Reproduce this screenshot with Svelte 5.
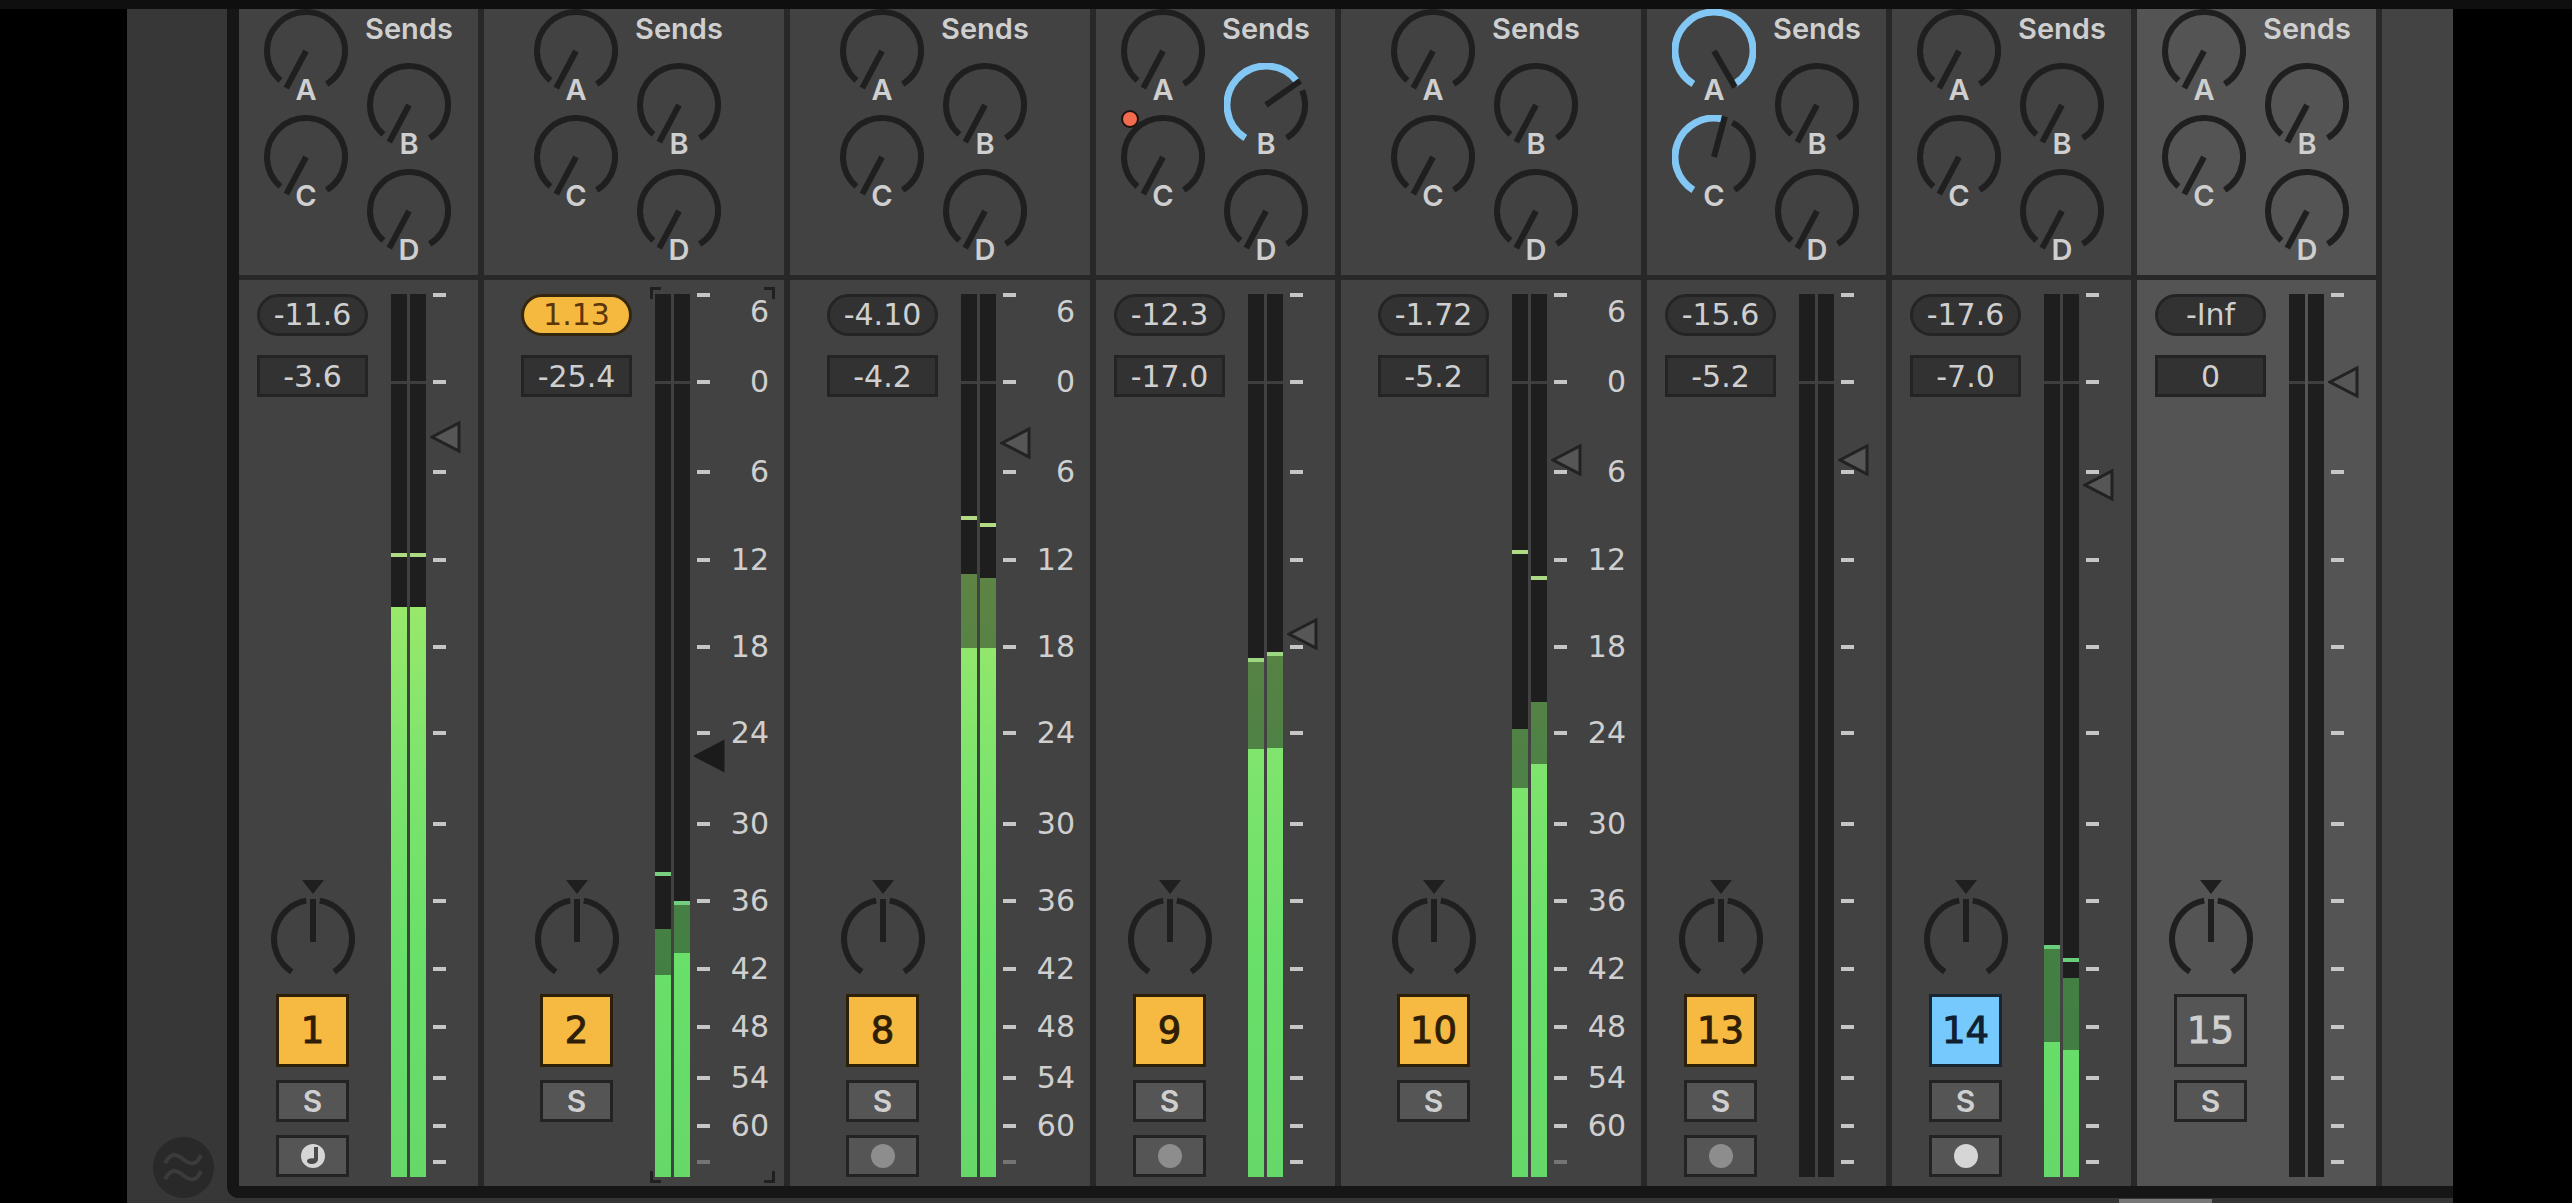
<script>
  const METER_HEIGHT = 883;

  // dB marks down the meter, `y` is the distance from its top edge
  const scale = [
    { y: 1, label: '6', labelY: 18 },
    { y: 88, label: '0' },
    { y: 178, label: '6' },
    { y: 266, label: '12' },
    { y: 353, label: '18' },
    { y: 439, label: '24' },
    { y: 530, label: '30' },
    { y: 607, label: '36' },
    { y: 675, label: '42' },
    { y: 733, label: '48' },
    { y: 784, label: '54' },
    { y: 832, label: '60' },
    { y: 868, label: '' }
  ];

  // levels: one entry per channel, peak line / held level / current level
  const tracks = [
    {
      id: 1, peak: '-11.6', volume: '-3.6', fader: 143, color: 'orange', arm: 'note',
      levels: [{ peak: 259, hold: 313, now: 313 }, { peak: 259, hold: 313, now: 313 }]
    },
    {
      id: 2, wide: true, selected: true, clipped: true, peak: '1.13', volume: '-25.4', fader: 462, color: 'orange',
      levels: [{ peak: 578, hold: 635, now: 681 }, { peak: 607, hold: 609, now: 659 }]
    },
    {
      id: 8, wide: true, peak: '-4.10', volume: '-4.2', fader: 149, color: 'orange', arm: 'off',
      levels: [{ peak: 222, hold: 280, now: 354 }, { peak: 229, hold: 284, now: 354 }]
    },
    {
      id: 9, peak: '-12.3', volume: '-17.0', fader: 340, color: 'orange', arm: 'off',
      sends: { B: 55 }, automated: 'C',
      levels: [{ peak: 364, hold: 365, now: 455 }, { peak: 358, hold: 359, now: 454 }]
    },
    {
      id: 10, wide: true, peak: '-1.72', volume: '-5.2', fader: 166, color: 'orange',
      levels: [{ peak: 256, hold: 435, now: 494 }, { peak: 282, hold: 408, now: 470 }]
    },
    {
      id: 13, peak: '-15.6', volume: '-5.2', fader: 166, color: 'orange', arm: 'off',
      sends: { A: 150, C: 15 }
    },
    {
      id: 14, peak: '-17.6', volume: '-7.0', fader: 191, color: 'blue', arm: 'on',
      levels: [{ peak: 651, hold: 652, now: 748 }, { peak: 664, hold: 684, now: 756 }]
    },
    { id: 15, peak: '-Inf', volume: '0', fader: 88, color: 'none', light: true }
  ];

  function point(angle, r) {
    const a = (angle * Math.PI) / 180;
    return `${(42 + r * Math.sin(a)).toFixed(2)} ${(42 - r * Math.cos(a)).toFixed(2)}`;
  }

  // angles run clockwise from twelve o'clock
  function arc(from, to) {
    const large = to - from > 180 ? 1 : 0;
    return `M${point(from, 39)} A39 39 0 ${large} 1 ${point(to, 39)}`;
  }
</script>

{#snippet sendKnob(track, name)}
  {@const angle = track.sends?.[name] ?? -152}
  <label class="send">
    <span class="dial">
      <svg width="84" height="84" viewBox="0 0 84 84" aria-hidden="true">
        {#if angle < 140}
          <path class="ring" d={arc(angle + 13, 148)} />
        {/if}
        {#if angle > -148}
          <path class="ring lit" d={arc(-148, angle > 140 ? 148 : angle - 4)} />
        {/if}
        <path class="pointer" d="M42 42 L{point(angle, 42)}" />
      </svg>
      {#if track.automated === name}
        <i class="automation"></i>
      {/if}
      <input type="range" min="-152" max="150" value={angle} aria-label="Track {track.id} send {name}" />
    </span>
    <span class="send-name">{name}</span>
  </label>
{/snippet}

<div class="window">
  <div class="titlebar"></div>
  <main class="mixer">
    <aside class="rail">
      <button class="crossfade" aria-label="Show crossfader section">
        <svg width="61" height="61" viewBox="0 0 61 61" aria-hidden="true">
          <circle cx="30.5" cy="30.5" r="30.5" fill="#292929" />
          <path
            d="M12 26 C18 15 24 17 30 22 S43 30 48 18 M12 42 C18 31 24 33 30 38 S43 46 48 34"
            fill="none" stroke="#3b3b3b" stroke-width="4"
          />
        </svg>
      </button>
    </aside>

    <div class="board">
      <div class="strips">
        {#each tracks as track (track.id)}
          <section class="strip" class:wide={track.wide} class:light={track.light} aria-label="Track {track.id}">
            <div class="sends">
              <div class="send-col">
                {@render sendKnob(track, 'A')}
                {@render sendKnob(track, 'C')}
              </div>
              <div class="send-col">
                <h2>Sends</h2>
                {@render sendKnob(track, 'B')}
                {@render sendKnob(track, 'D')}
              </div>
            </div>

            <div class="output">
              <div class="controls">
                <button class="peak" class:clipped={track.clipped} aria-label="Reset peak, {track.peak}">{track.peak}</button>
                <input class="volume" type="text" value={track.volume} aria-label="Track {track.id} volume" />

                <div class="switches">
                  <span class="dial">
                    <svg width="84" height="101" viewBox="0 -17 84 101" aria-hidden="true">
                      <path d="M31 -17 H53 L42 -3 Z" fill="#1f1f1f" />
                      <path class="ring" d={arc(-147, -10)} />
                      <path class="ring" d={arc(10, 147)} />
                      <path class="pointer" d="M42 2 V45" />
                    </svg>
                    <input type="range" min="-50" max="50" value="0" aria-label="Track {track.id} pan" />
                  </span>
                  <button class="activator {track.color}">{track.id}</button>
                  <button class="switch">S</button>
                  {#if track.arm}
                    <button class="switch" aria-label="Arm track {track.id}">
                      <svg width="24" height="24" viewBox="0 0 24 24" aria-hidden="true">
                        <circle cx="12" cy="12" r="12" fill={track.arm === 'off' ? '#8d8d8d' : '#d6d6d6'} />
                        {#if track.arm === 'note'}
                          <path d="M13 3 H17 V15 C17 19 13 20 10.5 20 C8 20 6 19 6 17 C6 15 9 14 13 14.5 Z" fill="#4a4a4a" />
                        {/if}
                      </svg>
                    </button>
                  {:else}
                    <div class="blank"></div>
                  {/if}
                </div>
              </div>

              <div class="meter">
                <svg width="35" height={METER_HEIGHT} viewBox="0 0 35 {METER_HEIGHT}" aria-hidden="true">
                  <defs>
                    <linearGradient id="level-{track.id}" gradientUnits="userSpaceOnUse" x1="0" y1="250" x2="0" y2={METER_HEIGHT}>
                      <stop offset="0" stop-color="#a2ea6a" />
                      <stop offset="0.35" stop-color="#7ee46d" />
                      <stop offset="0.65" stop-color="#69e069" />
                      <stop offset="1" stop-color="#66d869" />
                    </linearGradient>
                    <linearGradient id="peak-{track.id}" gradientUnits="userSpaceOnUse" x1="0" y1="200" x2="0" y2="680">
                      <stop offset="0" stop-color="#b8dc84" />
                      <stop offset="1" stop-color="#68cc7c" />
                    </linearGradient>
                  </defs>
                  {#each [0, 19] as x, channel}
                    {@const level = track.levels?.[channel]}
                    <rect {x} y="0" width="16" height={METER_HEIGHT} fill="#1e1e1e" />
                    <rect {x} y="87" width="16" height="3" fill="#3e3e3e" />
                    {#if level}
                      <rect {x} y={level.hold} width="16" height={METER_HEIGHT - level.hold} fill="url(#level-{track.id})" opacity="0.5" />
                      <rect {x} y={level.now} width="16" height={METER_HEIGHT - level.now} fill="url(#level-{track.id})" />
                      <rect {x} y={level.peak} width="16" height="4" fill="url(#peak-{track.id})" />
                    {/if}
                  {/each}
                </svg>

                <div class="scale">
                  {#each scale as mark}
                    <i class="tick" class:faint={track.wide && !mark.label} style="top: {mark.y}px"></i>
                    {#if track.wide && mark.label}
                      <span class="mark" style="top: {mark.labelY ?? mark.y}px">{mark.label}</span>
                    {/if}
                  {/each}
                </div>

                <svg class="handle" style="top: {track.fader}px" width="32" height="34" viewBox="0 0 32 34" aria-hidden="true">
                  <path
                    d="M2 17 L29 3 V31 Z"
                    fill={track.selected ? '#1b1b1b' : '#565656'}
                    stroke={track.selected ? '#1b1b1b' : '#222'}
                    stroke-width="3"
                  />
                </svg>
                <input
                  class="fader" type="range" min="0" max={METER_HEIGHT} value={METER_HEIGHT - track.fader}
                  aria-label="Track {track.id} fader"
                />
                {#if track.selected}
                  <div class="brackets"><i></i><i></i><i></i><i></i></div>
                {/if}
              </div>
            </div>
          </section>
        {/each}
        <div class="rest"></div>
      </div>
      <div class="scrollbar"><div class="thumb"></div></div>
    </div>
  </main>
</div>

<style>
  :global(body) {
    margin: 0;
    background: #000;
  }

  .window {
    font-family: Inter, 'Liberation Sans', sans-serif;
    color: #cfcfcf;
  }

  .titlebar {
    height: 9px;
    background: #0f0f0f;
  }

  .mixer {
    display: flex;
    margin: 0 119px 0 127px;
    background: #373737;
  }

  .rail {
    flex: none;
    display: flex;
    align-items: flex-end;
    justify-content: center;
    width: 100px;
    padding: 0 0 5px 12px;
    box-sizing: border-box;
  }

  .board {
    flex: 1;
    min-width: 0;
  }

  .strips {
    display: flex;
    border: solid #161616;
    border-width: 0 0 12px 12px;
    border-bottom-left-radius: 12px;
    background: #161616;
  }

  .strip {
    flex: 239 1 0;
    min-width: 0;
    box-sizing: border-box;
    border-right: 6px solid #282828;
    background: #424242;
  }

  .strip.wide {
    flex-grow: 300;
  }

  .strip.light {
    background: #545454;
  }

  .rest {
    flex: 71 1 0;
    background: #434343;
  }

  button,
  input {
    margin: 0;
    padding: 0;
    border: 0;
    background: none;
    color: inherit;
    font: inherit;
  }

  .crossfade {
    display: flex;
  }

  /* sends */
  .sends {
    display: flex;
    gap: 19px;
    height: 266px;
    padding-left: 25px;
    border-bottom: 5px solid #282828;
  }

  .wide .sends {
    padding-left: 50px;
  }

  .send-col {
    display: flex;
    flex-direction: column;
    align-items: center;
    gap: 11px;
    width: 84px;
  }

  h2 {
    margin: 6px 0 9px;
    font-size: 29px;
    line-height: 28px;
    font-weight: 600;
  }

  .send {
    display: flex;
    flex-direction: column;
    align-items: center;
  }

  .send-name {
    position: relative;
    margin-top: -17px;
    font-size: 29px;
    line-height: 28px;
    font-weight: 600;
  }

  .dial {
    position: relative;
    display: flex;
  }

  .dial input {
    position: absolute;
    inset: 0;
    width: 100%;
    height: 100%;
    opacity: 0;
  }

  .ring {
    fill: none;
    stroke: #1f1f1f;
    stroke-width: 6;
  }

  .ring.lit {
    stroke: #83c7f4;
    stroke-width: 7;
  }

  .pointer {
    stroke: #1f1f1f;
    stroke-width: 6;
  }

  .automation {
    position: absolute;
    top: -5px;
    left: 0;
    width: 14px;
    height: 14px;
    border: 2px solid #1d1210;
    border-radius: 50%;
    background: #f26b4c;
  }

  /* volume, pan and meter */
  .output {
    display: flex;
    gap: 23px;
    padding: 14px 0 9px 18px;
  }

  .wide .output {
    padding-left: 37px;
  }

  .controls {
    flex: none;
    display: flex;
    flex-direction: column;
    width: 111px;
  }

  .peak,
  .volume {
    box-sizing: border-box;
    width: 100%;
    height: 42px;
    border: 3px solid #242424;
    background: #323232;
    font-family: 'DejaVu Sans', sans-serif;
    font-size: 30px;
    line-height: 36px;
    text-align: center;
  }

  .peak {
    margin-bottom: 19px;
    border-radius: 21px;
  }

  .peak.clipped {
    border-color: #35270f;
    background: #f6b93f;
    color: #5b3609;
  }

  .switches {
    display: flex;
    flex-direction: column;
    align-items: center;
    gap: 13px;
    margin-top: auto;
  }

  .activator,
  .switch {
    box-sizing: border-box;
    display: flex;
    align-items: center;
    justify-content: center;
    width: 73px;
    height: 42px;
    border: 3px solid #232323;
    background: #555;
    font-size: 30px;
    font-weight: 600;
  }

  .activator {
    height: 73px;
    font-family: 'DejaVu Sans', sans-serif;
    font-size: 37px;
    font-weight: 400;
    -webkit-text-stroke: 1px currentColor;
  }

  .orange {
    border-color: #2d2009;
    background: #f6b942;
    color: #2f1e06;
  }

  .blue {
    border-color: #172632;
    background: #76c9fc;
    color: #0f2130;
  }

  .blank {
    height: 42px;
  }

  .meter {
    position: relative;
    flex: none;
    display: flex;
    gap: 7px;
  }

  .scale {
    position: relative;
    width: 30px;
  }

  .wide .scale {
    width: 72px;
  }

  .tick {
    position: absolute;
    left: 0;
    width: 13px;
    height: 4px;
    margin-top: -2px;
    background: #c6c6c6;
  }

  .tick.faint {
    background: #747474;
  }

  .mark {
    position: absolute;
    right: 0;
    margin-top: -15px;
    font-family: 'DejaVu Sans', sans-serif;
    font-size: 30px;
    line-height: 30px;
  }

  .handle {
    position: absolute;
    left: 39px;
    margin-top: -17px;
  }

  .fader {
    position: absolute;
    top: 0;
    left: 39px;
    width: 32px;
    height: 100%;
    writing-mode: vertical-lr;
    direction: rtl;
    opacity: 0;
  }

  /* focus corners round the selected meter */
  .brackets {
    position: absolute;
    inset: -7px -6px -6px -5px;
    pointer-events: none;
  }

  .brackets i {
    position: absolute;
    width: 8px;
    height: 9px;
    border: solid #202020;
    border-width: 0;
  }

  .brackets i:nth-child(1) {
    top: 0;
    left: 0;
    border-width: 3px 0 0 3px;
  }

  .brackets i:nth-child(2) {
    top: 0;
    right: 0;
    border-width: 3px 3px 0 0;
  }

  .brackets i:nth-child(3) {
    bottom: 0;
    left: 0;
    border-width: 0 0 3px 3px;
  }

  .brackets i:nth-child(4) {
    bottom: 0;
    right: 0;
    border-width: 0 3px 3px 0;
  }

  .scrollbar {
    display: flex;
    height: 5px;
    padding-left: 85%;
    background: #353535;
  }

  .thumb {
    width: 93px;
    margin-top: 1px;
    background: #777;
  }
</style>
